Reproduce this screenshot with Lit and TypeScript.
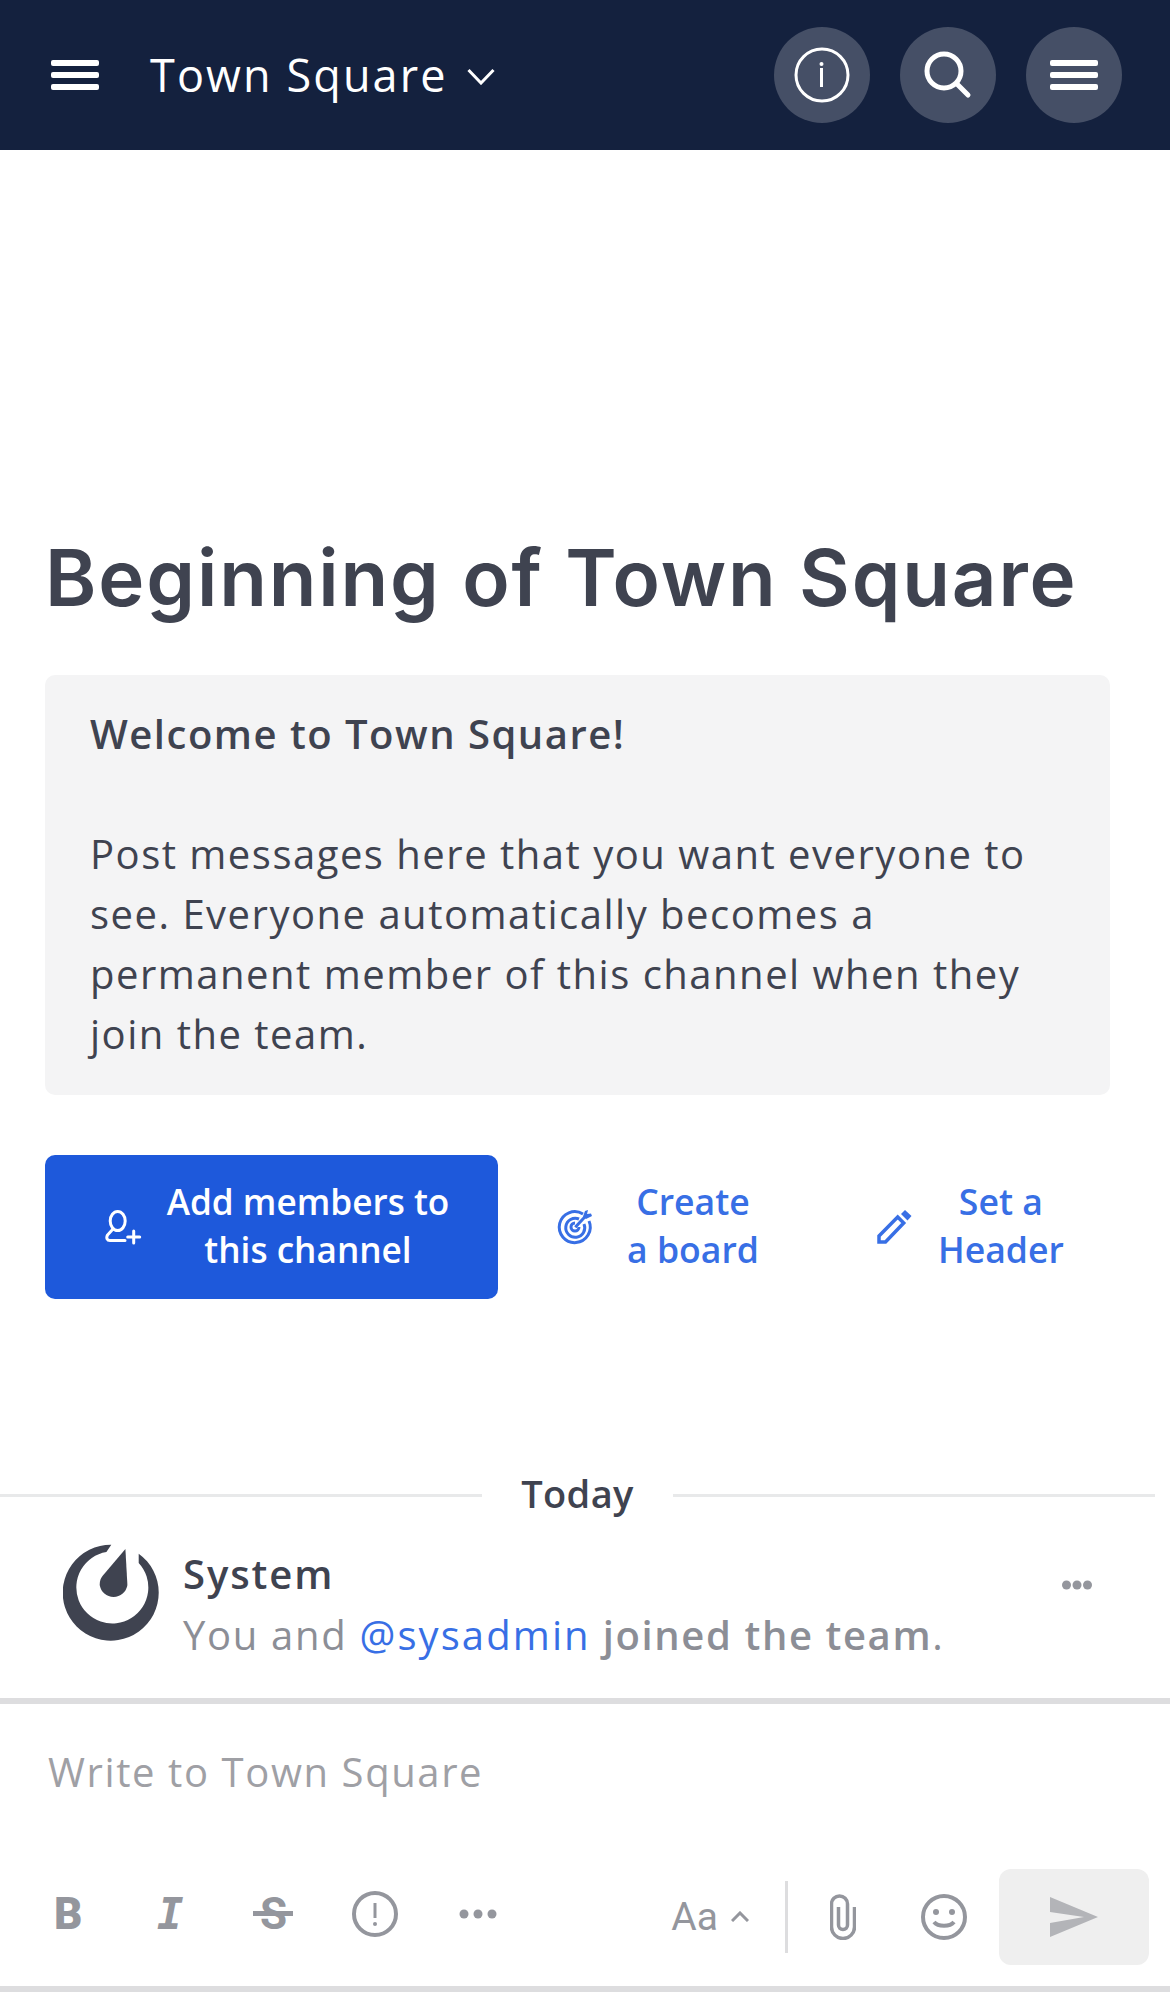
import { LitElement, html, css, svg } from 'lit';
import { customElement } from 'lit/decorators.js';

const hamburger = svg`<svg class="burger" width="48" height="30" viewBox="0 0 48 30" fill="#fff">
  <rect width="48" height="6" rx="2"/><rect y="12" width="48" height="6" rx="2"/><rect y="24" width="48" height="6" rx="2"/>
</svg>`;

@customElement('app-root')
export class AppRoot extends LitElement {
  static styles = css`
    :host {
      display: block;
      font-family: 'Open Sans', sans-serif;
      color: #3f4350;
      background: #fff;
    }

    .page {
      width: 1170px;
      height: 1992px;
      display: flex;
      flex-direction: column;
      overflow: hidden;
    }

    .header {
      flex: none;
      height: 150px;
      background: #14213e;
      display: flex;
      align-items: center;
      padding: 0 48px 0 51px;
      box-sizing: border-box;
    }

    .title {
      margin-left: 51px;
      font-size: 45px;
      letter-spacing: 2.1px;
      color: #fff;
      line-height: 60px;
    }

    .chevron {
      margin-left: 19px;
      margin-top: 2px;
    }

    .header-actions {
      margin-left: auto;
      display: flex;
      gap: 30px;
    }

    .round {
      width: 96px;
      height: 96px;
      border-radius: 50%;
      background: #454f66;
      display: flex;
      align-items: center;
      justify-content: center;
    }

    .intro {
      flex: none;
      padding: 368px 60px 0 45px;
    }

    h1 {
      margin: 0;
      font-family: 'Inter', sans-serif;
      font-size: 78px;
      font-weight: 600;
      line-height: 120px;
      letter-spacing: 1.85px;
      white-space: nowrap;
    }

    .welcome {
      margin-top: 37px;
      width: 1065px;
      box-sizing: border-box;
      padding: 29px 45px 31px;
      background: #f4f4f5;
      border-radius: 10px;
      font-size: 40px;
      line-height: 60px;
      letter-spacing: 1.5px;
    }

    .welcome strong {
      font-weight: 600;
    }

    .actions {
      margin-top: 60px;
      display: flex;
    }

    .action {
      flex: none;
      height: 144px;
      box-sizing: border-box;
      padding: 0 48px 0 60px;
      display: flex;
      align-items: center;
      border-radius: 10px;
      color: #386fe5;
      font-size: 35.6px;
      font-weight: 600;
      line-height: 48px;
      text-align: center;
      white-space: nowrap;
    }

    .action.primary {
      background: #1e59db;
      color: #fff;
      width: 453px;
      font-size: 35.2px;
    }

    .action svg {
      flex: none;
    }

    .action span {
      flex: 1;
      margin-bottom: 5px;
    }

    .action.primary span {
      margin-left: 23px;
    }

    .action.board {
      padding-left: 58px;
    }

    .action.board span {
      margin-left: 33px;
    }

    .action.set-header {
      margin-left: 10px;
    }

    .action.set-header span {
      margin-left: 26px;
    }

    .date {
      margin-top: 166px;
      width: 1155px;
      height: 60px;
      display: flex;
      align-items: center;
      flex: none;
      font-size: 38px;
      font-weight: 600;
      letter-spacing: 0.4px;
    }

    .date::before,
    .date::after {
      content: '';
      flex: 1;
      height: 3px;
      background: #e8e9ea;
    }

    .date span {
      padding: 0 39px 4px;
    }

    .post {
      flex: 1;
      min-height: 0;
      display: flex;
      padding: 19px 60px 0 63px;
    }

    .post-logo {
      flex: none;
    }

    .post-body {
      margin-left: 24px;
      flex: 1;
      min-width: 0;
    }

    .name {
      font-size: 40px;
      font-weight: 600;
      line-height: 60px;
      letter-spacing: 1.9px;
    }

    .message {
      margin-top: 1px;
      font-size: 40px;
      line-height: 60px;
      letter-spacing: 1.68px;
      color: #8c8e96;
      white-space: nowrap;
    }

    .message a {
      color: #386fe5;
      letter-spacing: 2.1px;
    }

    .message b {
      font-weight: 600;
      letter-spacing: 1.6px;
    }

    .post-menu {
      flex: none;
      margin-top: 36px;
      margin-right: 18px;
    }

    .composer {
      flex: none;
      height: 294px;
      box-sizing: border-box;
      border-top: 6px solid #dddddf;
      border-bottom: 6px solid #dddddf;
      display: flex;
      flex-direction: column;
    }

    .placeholder {
      padding: 38px 48px 0;
      font-size: 40px;
      line-height: 60px;
      letter-spacing: 1.6px;
      color: #9fa0a5;
      flex: 1;
    }

    .toolbar {
      flex: none;
      height: 117px;
      box-sizing: border-box;
      padding: 0 21px 22px 54px;
      display: flex;
      align-items: center;
      color: #94969d;
    }

    .format {
      display: flex;
      align-items: center;
      margin-bottom: 6px;
    }

    .fmt {
      display: block;
      font-size: 44px;
      line-height: 48px;
    }

    .fmt.bold {
      font-family: 'Roboto', sans-serif;
      font-weight: 900;
      width: 103px;
    }

    .fmt.italic {
      font-family: 'DejaVu Sans Mono', monospace;
      font-weight: 700;
      font-style: italic;
      width: 96px;
    }

    .fmt.strike {
      position: relative;
      font-family: 'Roboto', sans-serif;
      font-weight: 700;
      width: 99px;
      padding-left: 7px;
      box-sizing: border-box;
    }

    .fmt.strike::after {
      content: '';
      position: absolute;
      left: 0;
      top: 21px;
      width: 40px;
      height: 5px;
      background: #94969d;
    }

    .dots {
      margin-left: 61px;
    }

    .aa {
      margin-left: auto;
      font-family: 'Roboto', sans-serif;
      font-size: 39px;
    }

    .caret {
      margin-left: 13px;
    }

    .sep {
      margin-left: 36px;
      width: 3px;
      height: 72px;
      background: #dddddf;
    }

    .clip {
      margin-left: 42px;
    }

    .smile {
      margin-left: 65px;
    }

    .send {
      margin-left: 32px;
      width: 150px;
      height: 96px;
      border-radius: 12px;
      background: #efefef;
      display: flex;
      align-items: center;
      justify-content: center;
    }
  `;

  render() {
    return html`
      <div class="page">
        <header class="header">
          ${hamburger}
          <div class="title">Town Square</div>
          <svg class="chevron" width="28" height="17" viewBox="0 0 28 17" fill="none" stroke="#fff" stroke-width="3">
            <path d="M1.500 2 L14 15 L26.500 2"/>
          </svg>
          <div class="header-actions">
            <div class="round">
              <svg width="56" height="56" viewBox="0 0 56 56" fill="none" stroke="#fff" stroke-width="3">
                <circle cx="28" cy="28" r="26"/>
                <path d="M27.500 21 V40"/>
                <circle cx="27.500" cy="17" r="2" fill="#fff" stroke="none"/>
              </svg>
            </div>
            <div class="round">
              <svg width="48" height="48" viewBox="0 0 48 48" fill="none" stroke="#fff" stroke-linecap="round">
                <circle cx="20" cy="20" r="17" stroke-width="5"/>
                <path d="M33 33 L44 44" stroke-width="5"/>
              </svg>
            </div>
            <div class="round">${hamburger}</div>
          </div>
        </header>

        <section class="intro">
          <h1>Beginning of Town Square</h1>
          <div class="welcome">
            <strong>Welcome to Town Square!</strong><br /><br />
            Post messages here that you want everyone to see. Everyone automatically becomes a permanent member of this channel when they join the team.
          </div>
          <div class="actions">
            <div class="action primary">
              <svg width="38" height="36" viewBox="0 0 38 36" fill="none" stroke="#fff" stroke-width="3" stroke-linecap="round">
                <ellipse cx="12.700" cy="12" rx="7.500" ry="9.500"/>
                <path d="M8 20 L2.500 26 C1 29 2 31.500 5 31.500 H20"/>
                <path d="M28.700 22 V34 M22.700 28 H34.700"/>
              </svg>
              <span>Add members to<br />this channel</span>
            </div>
            <div class="action board">
              <svg width="38" height="38" viewBox="0 0 38 38" fill="none" stroke="#386fe5" stroke-width="3">
                <path d="M27 6 A15.500 15.500 0 1 0 33 13"/>
                <path d="M23 11 A9.500 9.500 0 1 0 28 16"/>
                <path d="M19 15 A4 4 0 1 0 23 19"/>
                <path d="M19.300 19.300 L29 8.700"/>
                <path fill="#386fe5" stroke="none" d="M29 3 L32 2 L31 6 L35 5.500 L36 8 L30 11 L27 8.500 Z"/>
              </svg>
              <span>Create<br />a board</span>
            </div>
            <div class="action set-header">
              <svg width="35" height="34" viewBox="0 0 35 34" fill="none" stroke="#386fe5" stroke-width="3.500">
                <path d="M2 32 V26 L20.700 7 L26.700 13 L8.500 32 Z"/>
                <path d="M24 4 L28 0 L34.500 6 L30.500 10.500 Z" fill="#386fe5" stroke="none"/>
              </svg>
              <span>Set a<br />Header</span>
            </div>
          </div>
        </section>

        <div class="date"><span>Today</span></div>

        <article class="post">
          <svg class="post-logo" width="96" height="98" viewBox="0 0 96 98" fill="#3f4350">
            <path d="M48.300 .7 A48 48 0 1 0 75.700 9.700 L75.700 19 A36 36 0 1 1 43.400 8 Z"/>
            <path d="M62.400 5 L64.400 41 A14 14 0 0 1 36.700 41 C36.700 37 37.500 34.500 39.500 32 Z"/>
          </svg>
          <div class="post-body">
            <div class="name">System</div>
            <div class="message">You and <a>@sysadmin</a> <b>joined the team</b>.</div>
          </div>
          <svg class="post-menu" width="30" height="10" viewBox="0 0 30 10" fill="#94969d">
            <circle cx="4.500" cy="5" r="4.500"/><circle cx="15" cy="5" r="4.500"/><circle cx="25.500" cy="5" r="4.500"/>
          </svg>
        </article>

        <footer class="composer">
          <div class="placeholder">Write to Town Square</div>
          <div class="toolbar">
            <div class="format">
              <span class="fmt bold">B</span>
              <span class="fmt italic">I</span>
              <span class="fmt strike">S</span>
              <svg width="46" height="46" viewBox="0 0 46 46" fill="none" stroke="#94969d" stroke-width="4">
                <circle cx="23" cy="23" r="21"/>
                <path d="M23 12 V27" stroke-width="3"/>
                <circle cx="23" cy="33" r="2" fill="#94969d" stroke="none"/>
              </svg>
              <svg class="dots" width="38" height="10" viewBox="0 0 38 10" fill="#94969d">
                <circle cx="5" cy="5" r="4.500"/><circle cx="19" cy="5" r="4.500"/><circle cx="33" cy="5" r="4.500"/>
              </svg>
            </div>
            <span class="aa">Aa</span>
            <svg class="caret" width="18" height="11" viewBox="0 0 18 11" fill="none" stroke="#94969d" stroke-width="3">
              <path d="M1 10 L9 2 L17 10"/>
            </svg>
            <div class="sep"></div>
            <svg class="clip" width="26" height="46" viewBox="0 0 26 46" fill="none" stroke="#94969d" stroke-width="3.500">
              <path d="M24.500 13 V33 A11.500 11.500 0 0 1 1.500 33 V10 A8 8 0 0 1 17.500 10 V31 A4.500 4.500 0 0 1 8.500 31 V13"/>
            </svg>
            <svg class="smile" width="46" height="46" viewBox="0 0 46 46" fill="none" stroke="#94969d" stroke-width="4">
              <circle cx="23" cy="23" r="21"/>
              <circle cx="15" cy="18" r="3" fill="#94969d" stroke="none"/>
              <circle cx="31" cy="18" r="3" fill="#94969d" stroke="none"/>
              <path d="M13 28 C17 33 29 33 33 28"/>
            </svg>
            <div class="send">
              <svg width="48" height="40" viewBox="0 0 48 40" fill="#b3b4b8">
                <path d="M0 0 L48 20 L0 40 V26 L34 20 L0 15 Z"/>
              </svg>
            </div>
          </div>
        </footer>
      </div>
    `;
  }
}
